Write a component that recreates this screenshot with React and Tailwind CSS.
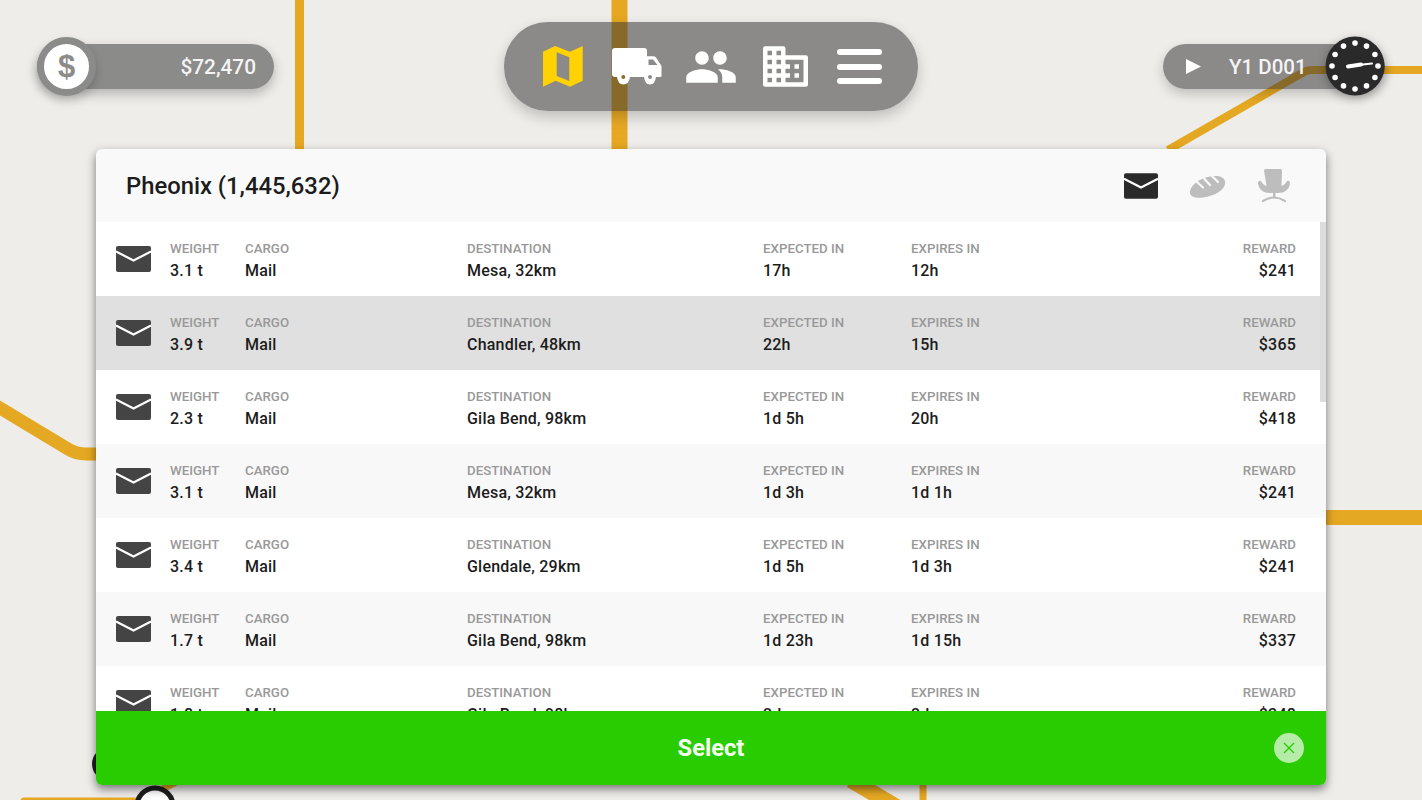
const rows = [
  { weight: '3.1 t', dest: 'Mesa, 32km', expected: '17h', expires: '12h', reward: '$241', bg: 'bg-white' },
  { weight: '3.9 t', dest: 'Chandler, 48km', expected: '22h', expires: '15h', reward: '$365', bg: 'bg-[#e0e0e0]', selected: true },
  { weight: '2.3 t', dest: 'Gila Bend, 98km', expected: '1d 5h', expires: '20h', reward: '$418', bg: 'bg-white' },
  { weight: '3.1 t', dest: 'Mesa, 32km', expected: '1d 3h', expires: '1d 1h', reward: '$241', bg: 'bg-[#f8f8f8]' },
  { weight: '3.4 t', dest: 'Glendale, 29km', expected: '1d 5h', expires: '1d 3h', reward: '$241', bg: 'bg-white' },
  { weight: '1.7 t', dest: 'Gila Bend, 98km', expected: '1d 23h', expires: '1d 15h', reward: '$337', bg: 'bg-[#f8f8f8]' },
  { weight: '1.8 t', dest: 'Gila Bend, 98km', expected: '2d', expires: '2d', reward: '$348', bg: 'bg-white' },
]

function MapBackground() {
  return (
    <svg className="absolute inset-0" width="1422" height="800" viewBox="0 0 1422 800" fill="none" stroke="#e5a823">
      <path d="M299.500 0V150" strokeWidth="9" />
      <path d="M619.500 0V150" strokeWidth="16" />
      <path d="M-5 405L68 449Q76 454 86 454H100" strokeWidth="13" />
      <path d="M1326 517.500H1422" strokeWidth="15" />
      <path d="M1168 150L1304 72Q1307 70 1312 70H1422" strokeWidth="8" />
      <path d="M24 801H140L180 780" strokeWidth="7" strokeLinecap="round" />
      <path d="M851 780L910 815" strokeWidth="16" />
      <path d="M923 780V800" strokeWidth="7" />
      <circle cx="109" cy="764" r="17" fill="#1e1e1e" stroke="none" />
      <circle cx="155" cy="806" r="18" fill="#fff" stroke="#1e1e1e" strokeWidth="5" />
    </svg>
  )
}

function MailIcon({ className }) {
  return (
    <svg className={className} viewBox="0 0 35 26">
      <rect x="0" y="0" width="35" height="26" rx="2" fill="currentColor" />
      <path d="M0 5.500L17.500 14.500L35 5.500" fill="none" stroke="#fff" strokeWidth="2.200" />
    </svg>
  )
}

function MapIcon() {
  return (
    <svg width="40" height="41" viewBox="0 0 40 41" fill="#ffd200">
      <path fillRule="evenodd" d="M0 5.700L12 0L27 5.700L39.700 0V34.700L27 40.700L12.700 34.700L0 40.700ZM13.700 6.300V30L26.300 35V11.300Z" />
    </svg>
  )
}

function TruckIcon() {
  return (
    <svg width="50" height="37" viewBox="0 0 50 37">
      <path fillRule="evenodd" fill="#fff" d="M3 0H32Q35 0 35 3V8.300H41Q43 8.300 44 9.500L49.500 18V28Q49.500 29 48.500 29H44Q43 36.500 38 36.500Q33 36.500 32 29H18Q17 36.500 11.300 36.500Q6 36.500 5 29H3Q0 29 0 26V3Q0 0 3 0ZM36.500 11.500V17H45.500L41 11.500Z" />
      <circle cx="11.300" cy="29" r="2" fill="#8a6c2c" />
      <circle cx="38" cy="29" r="2" fill="#8b8b89" />
    </svg>
  )
}

function PeopleIcon() {
  return (
    <svg width="54" height="54" viewBox="0 0 24 24" fill="#fff">
      <path d="M16 11c1.660 0 2.990-1.340 2.990-3S17.660 5 16 5c-1.660 0-3 1.340-3 3s1.340 3 3 3zm-8 0c1.660 0 2.990-1.340 2.990-3S9.660 5 8 5C6.340 5 5 6.340 5 8s1.340 3 3 3zm0 2c-2.330 0-7 1.170-7 3.500V19h14v-2.500c0-2.330-4.670-3.500-7-3.500zm8 0c-.290 0-.620.020-.970.050 1.160.840 1.970 1.970 1.970 3.450V19h6v-2.500c0-2.330-4.670-3.500-7-3.500z" />
    </svg>
  )
}

function BuildingIcon() {
  return (
    <svg width="45" height="41" viewBox="2 3 20 18">
      <path fill="#fff" d="M3 3h8a1 1 0 0 1 1 1v3h9a1 1 0 0 1 1 1v12a1 1 0 0 1-1 1H3a1 1 0 0 1-1-1V4a1 1 0 0 1 1-1z" />
      <path fill="#8b8b89" d="M4 5h2v2H4zM8 5h2v2H8zM4 9h2v2H4zM8 9h2v2H8zM4 13h2v2H4zM8 13h2v2H8zM4 17h2v2H4zM8 17h2v2H8z" />
      <path fill="#8b8b89" fillRule="evenodd" d="M20 19h-8v-2h2v-2h-2v-2h2v-2h-2V9h8zM18 11h-2v2h2zM18 15h-2v2h2z" />
    </svg>
  )
}

function ClockIcon() {
  const dots = Array.from({ length: 12 }, (_, i) => {
    const a = (i * Math.PI) / 6
    return [30 + 23 * Math.sin(a), 30 - 23 * Math.cos(a)]
  })
  return (
    <svg width="60" height="60" viewBox="0 0 60 60" className="drop-shadow-[0_3px_5px_rgba(0,0,0,0.3)]">
      <circle cx="30" cy="30" r="29.500" fill="#2a2a2a" />
      {dots.map(([x, y], i) => <circle key={i} cx={x} cy={y} r="2.800" fill="#fff" />)}
      <path d="M24 30L47 27.500" stroke="#fff" strokeWidth="2" strokeLinecap="round" />
      <path d="M23 30.500L36 28.500" stroke="#fff" strokeWidth="4" strokeLinecap="round" />
    </svg>
  )
}

function BreadIcon() {
  return (
    <svg width="37" height="22" viewBox="0 0 37 22">
      <path fill="#bdbdbd" d="M1 15C3 7 14 0 27 0C33 0 37 3 36 8C35 14 26 20 14 21.500C5 22.500 0 20 1 15Z" />
      <path d="M7 5L14 11.500M15 2.500L21 9M23 0L29 6" stroke="#f9f9f9" strokeWidth="2.200" strokeLinecap="round" />
    </svg>
  )
}

function ChairIcon() {
  return (
    <svg width="32" height="34" viewBox="0 1 32 34" fill="#bdbdbd">
      <path d="M6 2.500Q6 1 7.500 1H22.500Q24 1 24 2.500L23.500 18Q27 17 29 13Q32 12 32 16Q30 25 20 25H12Q2 25 0 16Q0 12 3 13Q5 17 8.500 18Z" />
      <rect x="15" y="25" width="2.500" height="4" />
      <path d="M5 33Q16 26 27 33" fill="none" stroke="#bdbdbd" strokeWidth="2.200" strokeLinecap="round" />
    </svg>
  )
}

function Field({ label, value, className = '' }) {
  return (
    <div className={`pt-[3px] ${className}`}>
      <p className="text-[13.300px] leading-[16px] font-medium text-[#999]">{label}</p>
      <p className="mt-[5px] text-[16px] leading-[18px] font-medium tracking-[0.2px] text-[#1c1c1c]">{value}</p>
    </div>
  )
}

function Row({ row }) {
  return (
    <div className={`flex h-[74px] shrink-0 items-center pl-[20px] pr-[30px] ${row.bg}`}>
      <MailIcon className="h-[26px] w-[35px] shrink-0 text-[#444]" />
      <Field label="WEIGHT" value={row.weight} className="ml-[19px] w-[75px]" />
      <Field label="CARGO" value="Mail" className="w-[222px]" />
      <Field label="DESTINATION" value={row.dest} className="w-[296px]" />
      <Field label="EXPECTED IN" value={row.expected} className="w-[148px]" />
      <Field label="EXPIRES IN" value={row.expires} className="w-[200px]" />
      <Field label="REWARD" value={row.reward} className="flex-1 text-right" />
    </div>
  )
}

export default function App() {
  return (
    <div className="relative h-[800px] w-full overflow-hidden bg-[#eeedea] font-['Roboto',sans-serif]">
      <MapBackground />

      <div className="relative flex h-full flex-col">
        {/* HUD */}
        <div className="grid h-[149px] grid-cols-[1fr_auto_1fr] items-start px-[37px] pt-[22px]">
          <div className="flex h-[89px] items-center">
            <div className="relative h-[45px] w-[237px] rounded-full bg-[#8b8b89] shadow-[0_5px_12px_rgba(0,0,0,0.25)]">
              <div className="absolute left-0 top-[-7px] flex h-[59px] w-[59px] items-center justify-center rounded-full border-[7px] border-[#8b8b89] bg-white shadow-[0_5px_10px_rgba(0,0,0,0.18)]">
                <span className="text-[31px] font-bold leading-none text-[#8b8b89] font-['Liberation_Sans',sans-serif]">$</span>
              </div>
              <p className="pr-[18px] text-right text-[20.800px] font-medium leading-[46px] text-[#f4f4f4]">$72,470</p>
            </div>
          </div>

          <div className="flex h-[89px] w-[414px] items-center rounded-[44px] bg-[rgba(48,48,48,0.52)] pl-[39px] shadow-[0_6px_14px_rgba(0,0,0,0.2)]">
            <MapIcon />
            <div className="ml-[29px]"><TruckIcon /></div>
            <div className="ml-[22px]"><PeopleIcon /></div>
            <div className="ml-[25px]"><BuildingIcon /></div>
            <div className="ml-[29px] flex w-[45px] flex-col gap-[8.500px]">
              <div className="h-[6px] rounded-full bg-white" />
              <div className="h-[6px] rounded-full bg-white" />
              <div className="h-[6px] rounded-full bg-white" />
            </div>
          </div>

          <div className="flex h-[89px] items-center justify-end">
            <div className="relative flex h-[45px] w-[222px] items-center rounded-full bg-[rgba(48,48,48,0.52)] pl-[23px] shadow-[0_5px_12px_rgba(0,0,0,0.2)]">
              <svg width="15" height="15" viewBox="0 0 15 15" fill="#fff"><path d="M0 0L15 7.500L0 15Z" /></svg>
              <span className="ml-[28px] mt-[1px] text-[20.500px] font-medium text-[#f4f4f4]">Y1 D001</span>
              <div className="absolute right-0 top-[-8px] h-[60px]"><ClockIcon /></div>
            </div>
          </div>
        </div>

        {/* Cargo panel */}
        <div className="ml-[96px] flex h-[636px] w-[1230px] flex-col overflow-hidden rounded-[6px] shadow-[0_4px_10px_rgba(0,0,0,0.5)]">
          <div className="flex h-[73px] shrink-0 items-center bg-[#f9f9f9] pl-[30px] pr-[36px]">
            <h1 className="flex-1 pt-[2px] text-[23.800px] font-medium text-[#1c1c1c]">Pheonix (1,445,632)</h1>
            <MailIcon className="h-[26px] w-[34px] text-[#2a2a2a]" />
            <div className="ml-[31px] mt-[2px]"><BreadIcon /></div>
            <div className="ml-[32px]"><ChairIcon /></div>
          </div>

          <div className="relative flex-1 overflow-hidden">
            {rows.map((row, i) => <Row key={i} row={row} />)}
            <div className="absolute right-0 top-0 h-[180px] w-[6px] bg-[#dddddd]" />
          </div>

          <div className="relative flex h-[74px] shrink-0 items-center justify-center bg-[#29cc00]">
            <span className="pt-[2px] text-[23.700px] font-bold text-[#f4fff0]">Select</span>
            <div className="absolute right-[22.500px] top-[22px] flex h-[30px] w-[30px] items-center justify-center rounded-full bg-[#b5eda8]">
              <svg width="14" height="14" viewBox="0 0 14 14" stroke="#29cc00" strokeWidth="1.400" fill="none"><path d="M2 2L12 12M12 2L2 12" /></svg>
            </div>
          </div>
        </div>
      </div>
    </div>
  )
}
